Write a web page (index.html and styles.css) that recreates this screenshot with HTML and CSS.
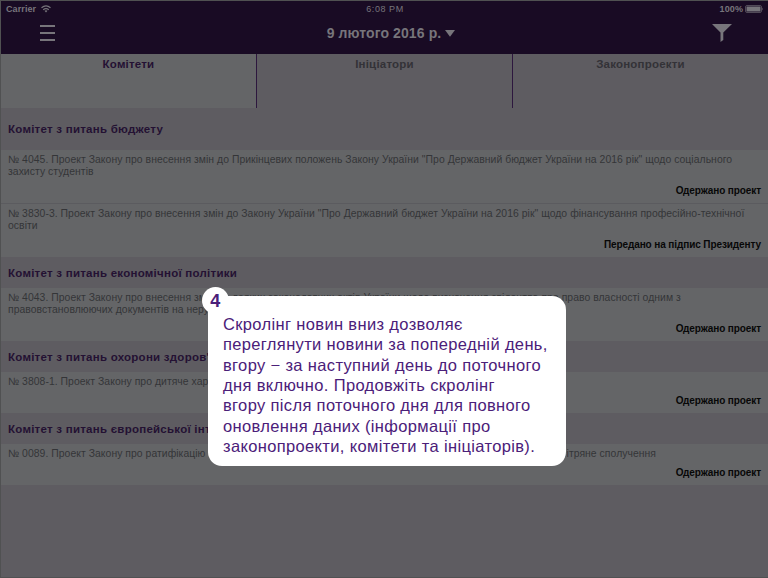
FILE: index.html
```html
<!DOCTYPE html>
<html lang="uk">
<head>
<meta charset="utf-8">
<title>Комітети</title>
<link rel="stylesheet" href="styles.css">
</head>
<body>
<div class="screen">
  <header class="header">
    <div class="status">
      <div class="carrier"><span>Carrier</span>
        <svg width="10" height="8" viewBox="0 0 10 8" fill="none" stroke="currentColor" stroke-width="1.2"><path d="M.5 2.8Q5-.9 9.500 2.800M2.200 4.700Q5 2.400 7.800 4.700"/><path d="M3.500 5.800Q5 4.800 6.500 5.800L5 7.500Z" fill="currentColor" stroke="none"/></svg>
      </div>
      <span class="clock">6:08 PM</span>
      <div class="battery"><span>100%</span>
        <svg width="19" height="8" viewBox="0 0 19 8"><rect x=".5" y=".5" width="16" height="7" rx="1.500" fill="none" stroke="currentColor" stroke-opacity=".6"/><rect x="1.500" y="1.500" width="14" height="5" rx=".5" fill="currentColor"/><path d="M17.300 2.500Q18.700 4 17.300 5.500Z" fill="currentColor"/></svg>
      </div>
    </div>
    <div class="nav">
      <svg class="menu" width="15" height="16" viewBox="0 0 15 16"><path d="M0 1h15M0 8h15M0 15h15" stroke="currentColor" stroke-width="1.900"/></svg>
      <div class="date"><span>9 лютого 2016 р.</span><svg width="10" height="7" viewBox="0 0 10 7"><path d="M0 0H10L5 6.700Z" fill="currentColor"/></svg></div>
      <svg class="filter" width="20" height="18" viewBox="0 0 20 18"><path d="M0 0H20L11.300 8.500V16L8.500 18V8.500Z" fill="currentColor"/></svg>
    </div>
  </header>
  <nav class="tabs">
    <div class="tab active">Комітети</div>
    <div class="tab">Ініціатори</div>
    <div class="tab">Законопроекти</div>
  </nav>
  <main>
    <h2 class="section first">Комітет з питань бюджету</h2>
    <article class="bill">
      <p>№ 4045. Проект Закону про внесення змін до Прикінцевих положень Закону України "Про Державний бюджет України на 2016 рік" щодо соціального<br>захисту студентів</p>
      <strong>Одержано проект</strong>
    </article>
    <article class="bill">
      <p>№ 3830-3. Проект Закону про внесення змін до Закону України "Про Державний бюджет України на 2016 рік" щодо фінансування професійно-технічної<br>освіти</p>
      <strong>Передано на підпис Президенту</strong>
    </article>
    <h2 class="section">Комітет з питань економічної політики</h2>
    <article class="bill">
      <p>№ 4043. Проект Закону про внесення змін до деяких законодавчих актів України щодо визначення свідоцтва про право власності одним з<br>правовстановлюючих документів на нерухоме майно</p>
      <strong>Одержано проект</strong>
    </article>
    <h2 class="section">Комітет з питань охорони здоров'я</h2>
    <article class="bill short">
      <p>№ 3808-1. Проект Закону про дитяче харчування</p>
      <strong>Одержано проект</strong>
    </article>
    <h2 class="section">Комітет з питань європейської інтеграції</h2>
    <article class="bill short">
      <p class="split"><span>№ 0089. Проект Закону про ратифікацію Угоди</span><span class="tail">про повітряне сполучення</span></p>
      <strong>Одержано проект</strong>
    </article>
  </main>
  <aside class="tip">
    <span class="step">4</span>
    <p>Скролінг новин вниз дозволяє<br>переглянути новини за попередній день,<br>вгору − за наступний день до поточного<br>дня включно. Продовжіть скролінг<br>вгору після поточного дня для повного<br>оновлення даних (інформації про<br>законопроекти, комітети та ініціаторів).</p>
  </aside>
</div>
</body>
</html>
```
FILE: styles.css
```css
* { box-sizing: border-box; }
body { margin: 0; font-family: "Liberation Sans", Arial, sans-serif; }
p, h2 { margin: 0; }
svg { display: block; }
.screen {
  position: relative;
  width: 768px;
  height: 578px;
  overflow: hidden;
  background: #5e5c61;
  border: solid #505152;
  border-width: 1px 0 1px 1px;
}
.header { height: 53px; background: #190b24; color: #77757b; }
.status {
  display: grid;
  grid-template-columns: 1fr auto 1fr;
  height: 16px;
  align-items: center;
  padding: 0 4px 0 5px;
  font-size: 9px;
  font-weight: bold;
  letter-spacing: .1px;
}
.carrier, .battery { display: flex; align-items: center; gap: 5px; }
.battery { justify-content: flex-end; gap: 2px; }
.clock { font-weight: normal; letter-spacing: .55px; }
.nav {
  display: grid;
  grid-template-columns: 1fr auto 1fr;
  align-items: center;
  height: 32px;
  padding: 0 36px 0 39px;
}
.filter { justify-self: end; }
.date { display: flex; align-items: center; gap: 4px; margin: 0 -5px 0 5px; font-size: 14px; font-weight: bold; letter-spacing: .1px; }
.tabs { display: grid; grid-template-columns: 256px 256px 1fr; height: 54px; }
.tab {
  padding-top: 3px;
  border-right: 1px solid #2d173e;
  font-size: 11.5px;
  line-height: 15px;
  font-weight: bold;
  letter-spacing: .2px;
  text-align: center;
  color: #333237;
}
.tab:last-child { border-right: 0; }
.tab.active { background: #646567; color: #241133; }
.section {
  height: 31px;
  padding-left: 7px;
  font-size: 11.5px;
  line-height: 32px;
  letter-spacing: .25px;
  color: #241133;
  white-space: nowrap;
}
.section.first { height: 42px; line-height: 42px; }
.bill {
  display: flex;
  flex-direction: column;
  justify-content: space-between;
  height: 53px;
  padding: 4px 7px 6px 7px;
  background: #646567;
  color: #343538;
}
.bill + .bill { height: 54px; border-top: 1px solid #5b5b5f; }
.bill.short { height: 41px; }
.bill p { font-size: 10.4px; line-height: 12px; letter-spacing: .045px; white-space: nowrap; }
.bill strong { font-size: 10px; line-height: 12px; letter-spacing: -.1px; text-align: right; color: #080808; }
.split { display: flex; justify-content: space-between; }
.tail { padding-right: 105px; }
.tip {
  position: absolute;
  left: 207px;
  top: 295px;
  width: 357.5px;
  height: 170px;
  padding: 18px 0 0 15px;
  border-radius: 14px;
  background: #fff;
  color: #4b2079;
  font-size: 16.5px;
  line-height: 20.33px;
  letter-spacing: .35px;
  white-space: nowrap;
}
.step {
  position: absolute;
  left: -6px;
  top: -9px;
  width: 27px;
  height: 27px;
  border-radius: 50%;
  background: #fff;
  font-size: 18px;
  line-height: 29px;
  font-weight: bold;
  text-align: center;
}
```
